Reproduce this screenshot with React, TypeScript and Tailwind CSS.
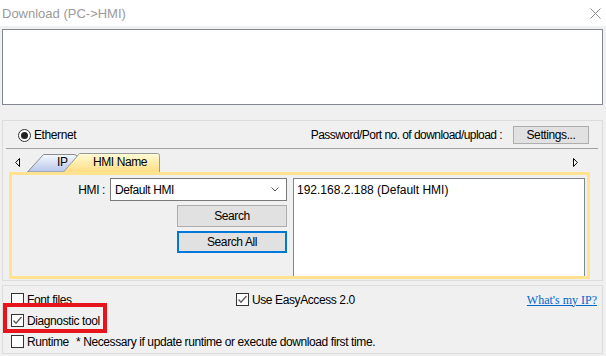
import React from "react";

function CheckBox({ checked }: { checked?: boolean }) {
  return (
    <span className="w-[13px] h-[13px] border border-[#333] bg-white flex items-center justify-center shrink-0">
      {checked ? (
        <svg width="11" height="11" viewBox="0 0 11 11" className="block">
          <path d="M1.5 5.5 L4 8.2 L9.5 2" fill="none" stroke="#5a5a5a" strokeWidth="1.3" />
        </svg>
      ) : null}
    </span>
  );
}

export default function App() {
  return (
    <div className="w-[606px] h-[356px] overflow-hidden bg-[#f0f0f0] flex flex-col text-[12px] tracking-[-0.4px] text-black leading-none font-['Liberation_Sans',Arial,sans-serif]">
      {/* title bar */}
      <div className="h-[26px] bg-white flex items-center justify-between pl-[2px] pr-[5px] shrink-0">
        <span className="text-[13px] tracking-normal text-[#9a9a9a]">Download (PC-&gt;HMI)</span>
        <svg width="11" height="11" viewBox="0 0 11 11" className="block">
          <path d="M0.5 0.5 L10.5 10.5 M10.5 0.5 L0.5 10.5" stroke="#8a8a8a" strokeWidth="1" />
        </svg>
      </div>

      <div className="flex flex-col pl-[2px] pr-[3px] pt-[3px]">
        {/* message box */}
        <div className="h-[76px] bg-white border border-[#828790]" />

        {/* group box 1 */}
        <div className="mt-[15px] h-[161px] border border-[#dcdcdc] flex flex-col">
          <div className="mt-[5px] h-[18px] flex items-center pl-[15px] pr-[13px]">
            <span className="w-[13px] h-[13px] rounded-full border border-[#333] bg-white flex items-center justify-center">
              <span className="w-[7px] h-[7px] rounded-full bg-[#222]" />
            </span>
            <span className="ml-[3px]">Ethernet</span>
            <span className="ml-auto tracking-[-0.55px]">Password/Port no. of download/upload :</span>
            <button className="ml-[11px] w-[76px] h-[18px] bg-[#e1e1e1] border border-[#adadad] flex items-center justify-center">
              Settings...
            </button>
          </div>
          <div className="mt-[4px] h-px bg-[#a0a0a0] ml-[3px] mr-[4px]" />
          {/* tab strip */}
          <div className="mt-[4px] h-[19px] flex items-center pl-[12px] pr-[24px]">
            <svg width="5" height="9" viewBox="0 0 5 9" className="block">
              <path d="M4.5 0.5 L0.7 4.5 L4.5 8.5 Z" fill="#fff" stroke="#000" strokeWidth="1" />
            </svg>
            <div className="relative ml-[7px] w-[135px] h-[19px] self-end">
              <svg width="135" height="19" viewBox="0 0 135 19" className="absolute left-0 top-0">
                <defs>
                  <linearGradient id="gip" x1="0" y1="0" x2="0" y2="1">
                    <stop offset="0" stopColor="#f3faff" />
                    <stop offset="1" stopColor="#b7c5e8" />
                  </linearGradient>
                  <linearGradient id="ghmi" x1="0" y1="0" x2="0" y2="1">
                    <stop offset="0" stopColor="#fffbd6" />
                    <stop offset="1" stopColor="#ffde84" />
                  </linearGradient>
                </defs>
                <path d="M0.5 19 L16.5 1.5 L47 1.5 Q50 1.5 50 4 L50 19 Z" fill="url(#gip)" stroke="#8a8a8a" />
                <path d="M36.5 19 L52.5 0.5 L130.5 0.5 Q132.5 0.5 132.5 2.5 L132.5 19" fill="url(#ghmi)" stroke="#9a9a9a" />
              </svg>
              <span className="absolute left-[30px] top-0 leading-[19px]">IP</span>
              <span className="absolute left-[66px] top-0 leading-[19px]">HMI Name</span>
            </div>
            <svg width="5" height="9" viewBox="0 0 5 9" className="block ml-auto">
              <path d="M0.5 0.5 L4.3 4.5 L0.5 8.5 Z" fill="#fff" stroke="#000" strokeWidth="1" />
            </svg>
          </div>
          {/* tab page */}
          <div className="ml-[6px] w-[581px] h-[107px] border-[3px] border-[#ffe390] bg-[#f0f0f0] flex pt-[3px] pr-[2px] overflow-hidden">
            <div className="w-[275px] flex flex-col items-end">
              <div className="flex items-center h-[23px]">
                <span>HMI :</span>
                <div className="ml-[5px] w-[177px] h-[23px] bg-white border border-[#7a7a7a] flex items-center pl-[4px] pr-[7px]">
                  <span>Default HMI</span>
                  <svg width="8" height="5" viewBox="0 0 8 5" className="block ml-auto">
                    <path d="M0.5 0.5 L4 4 L7.5 0.5" fill="none" stroke="#555" strokeWidth="1" />
                  </svg>
                </div>
              </div>
              <button className="mt-[4px] w-[110px] h-[22px] bg-[#e1e1e1] border border-[#adadad] flex items-center justify-center">
                Search
              </button>
              <button className="mt-[4px] w-[110px] h-[22px] bg-[#e1e1e1] border-2 border-[#0078d7] flex items-center justify-center">
                Search All
              </button>
            </div>
            <div className="ml-[6px] flex-1 bg-white border border-b-0 border-[#828790] pl-[3px] pt-[5px] h-[110px] tracking-normal">
              192.168.2.188 (Default HMI)
            </div>
          </div>
        </div>

        {/* group box 2 */}
        <div className="mt-[4px] h-[69px] border border-[#dcdcdc] flex flex-col pt-[3px]">
          <div className="h-[21px] flex items-center pl-[8px] pr-[5px]">
            <div className="w-[225px] flex items-center">
              <CheckBox />
              <span className="ml-[3px]">Font files</span>
            </div>
            <CheckBox checked />
            <span className="ml-[3px]">Use EasyAccess 2.0</span>
            <span className="ml-auto text-[12px] tracking-normal text-[#0066cc] underline font-['Liberation_Serif',serif]">What&apos;s my IP?</span>
          </div>
          <div className="relative h-[21px] flex items-center pl-[8px]">
            <CheckBox checked />
            <span className="ml-[3px]">Diagnostic tool</span>
            <div className="absolute left-0 top-[-7px] w-[104px] h-[30px] border-4 border-[#e8141c]" />
          </div>
          <div className="h-[21px] flex items-center pl-[8px]">
            <div className="w-[65px] flex items-center">
              <CheckBox />
              <span className="ml-[3px]">Runtime</span>
            </div>
            <span>* Necessary if update runtime or execute download first time.</span>
          </div>
        </div>
      </div>
    </div>
  );
}
